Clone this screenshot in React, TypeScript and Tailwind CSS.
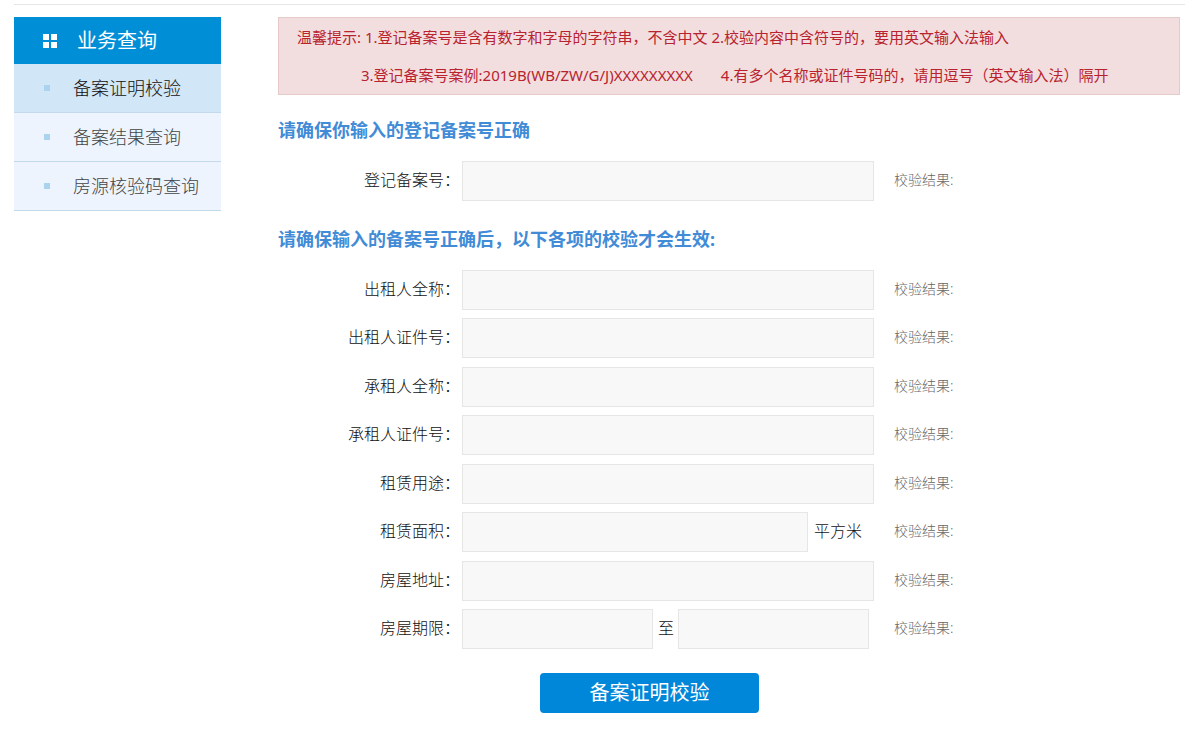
import React, { useState } from 'react';

interface Field {
  id: string;
  label: string;
  kind?: 'text' | 'area' | 'range';
}

const menuItems = ['备案证明校验', '备案结果查询', '房源核验码查询'];

const recordField: Field = { id: 'recordNo', label: '登记备案号' };

const detailFields: Field[] = [
  { id: 'lessorName', label: '出租人全称' },
  { id: 'lessorCert', label: '出租人证件号' },
  { id: 'lesseeName', label: '承租人全称' },
  { id: 'lesseeCert', label: '承租人证件号' },
  { id: 'usage', label: '租赁用途' },
  { id: 'area', label: '租赁面积', kind: 'area' },
  { id: 'address', label: '房屋地址' },
  { id: 'term', label: '房屋期限', kind: 'range' },
];

const inputClass =
  'h-10 min-w-0 border border-[#e6e6e6] bg-[#f8f8f8] px-2 text-base text-[#333] outline-none focus:border-[#0087d9]';

function FieldRow({ field }: { field: Field }) {
  return (
    <div className="flex items-center">
      <label htmlFor={field.id} className="w-46 shrink-0 pr-0.5 pb-0.5 text-right text-base text-[#111]">
        {field.label}：
      </label>
      <div className="flex w-[412px] items-center text-base text-[#111]">
        {field.kind === 'area' && (
          <>
            <input id={field.id} type="text" className={`${inputClass} w-[346px]`} />
            <span className="ml-1.5 shrink-0 pb-0.5">平方米</span>
          </>
        )}
        {field.kind === 'range' && (
          <>
            <input id={field.id} type="text" className={`${inputClass} w-[191px]`} />
            <span className="mr-1 ml-[5px] shrink-0 pb-0.5">至</span>
            <input type="text" aria-label="房屋期限" className={`${inputClass} w-[191px]`} />
          </>
        )}
        {!field.kind && <input id={field.id} type="text" className={`${inputClass} w-full`} />}
      </div>
      <span className="ml-5 shrink-0 pb-0.5 text-sm text-[#666]">校验结果:</span>
    </div>
  );
}

export default function App() {
  const [active, setActive] = useState(0);

  return (
    <div className="bg-white pt-1 pr-[15px] pb-6 pl-3.5 font-['Noto_Sans','Noto_Sans_CJK_SC',sans-serif] font-light">
      <div className="flex items-start border-t border-[#e6e6e6] pt-3 pr-[5px]">
        {/* 左侧菜单 */}
        <nav className="w-[207px] shrink-0">
          <h2 className="flex h-[47px] items-center bg-[#008fd7] pl-[29px] text-xl font-normal text-white">
            <svg className="mr-5 h-3.5 w-3.5" viewBox="0 0 14 14" fill="currentColor">
              <rect x="0" y="0" width="6" height="6" />
              <rect x="8" y="0" width="6" height="6" />
              <rect x="0" y="8" width="6" height="6" />
              <rect x="8" y="8" width="6" height="6" />
            </svg>
            业务查询
          </h2>
          <ul>
            {menuItems.map((item, i) => (
              <li key={item}>
                <a
                  href="#"
                  onClick={() => setActive(i)}
                  className={`flex h-[49px] items-center border-b border-[#c3d9ec] pl-[30px] text-lg ${
                    i === active ? 'bg-[#d1e6f6] text-[#111]' : 'bg-[#eef4fd] text-[#444]'
                  }`}
                >
                  <span className="mr-[23px] h-1.5 w-1.5 bg-[#a9d3ee]" />
                  {item}
                </a>
              </li>
            ))}
          </ul>
        </nav>

        {/* 校验表单 */}
        <main className="ml-[57px] min-w-0 flex-1">
          <div className="border border-[#e6caca] bg-[#f2dede] pl-[18px] text-[15px] leading-[38px] font-normal text-[#b8232f]">
            <p>
              温馨提示: 1.登记备案号是含有数字和字母的字符串，不含中文 2.校验内容中含符号的，要用英文输入法输入
            </p>
            <p className="pl-16">
              <span className="mr-7">3.登记备案号案例:2019B(WB/ZW/G/J)XXXXXXXXX</span>
              4.有多个名称或证件号码的，请用逗号（英文输入法）隔开
            </p>
          </div>

          <form onSubmit={(e) => e.preventDefault()}>
            <h3 className="pt-6 pb-5 text-lg leading-[22px] font-bold text-[#428bd6]">
              请确保你输入的登记备案号正确
            </h3>
            <FieldRow field={recordField} />

            <h3 className="pt-[27px] pb-5 text-lg leading-[22px] font-bold text-[#428bd6]">
              请确保输入的备案号正确后，以下各项的校验才会生效:
            </h3>
            {detailFields.map((field) => (
              <div key={field.id} className="odd:pb-[9px] even:pb-2">
                <FieldRow field={field} />
              </div>
            ))}

            <button
              type="submit"
              className="mt-[15px] ml-[262px] h-10 w-[219px] rounded bg-[#0087d9] text-xl font-normal text-white"
            >
              备案证明校验
            </button>
          </form>
        </main>
      </div>
    </div>
  );
}
